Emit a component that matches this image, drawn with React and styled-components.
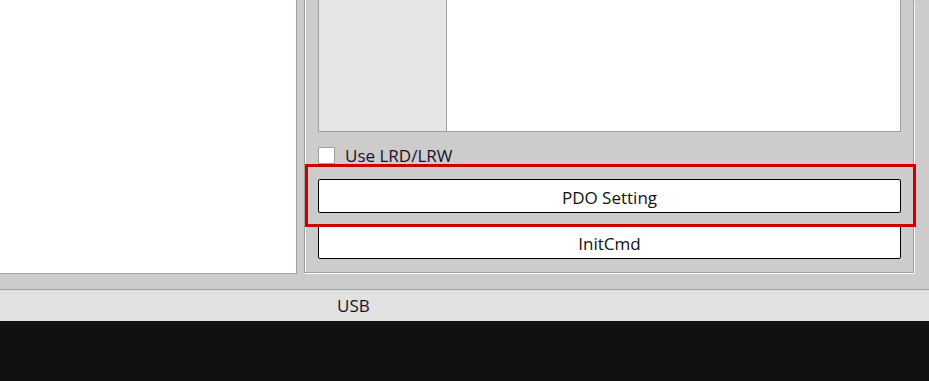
import styled, { createGlobalStyle } from "styled-components";

const GlobalStyle = createGlobalStyle`
  html, body {
    margin: 0;
    padding: 0;
    overflow: hidden;
    background: #111111;
  }
`;

const Window = styled.div`
  position: relative;
  width: 929px;
  height: 381px;
  display: flex;
  flex-direction: column;
  font-family: "Open Sans", "Noto Sans", sans-serif;
  color: #111;
`;

const Main = styled.div`
  height: 289px;
  display: flex;
  align-items: flex-start;
  gap: 7px;
  background: #cdcbcb;
`;

const LeftPanel = styled.div`
  width: 296px;
  height: 273px;
  background: #ffffff;
  border-right: 1px solid #a0a0a0;
  border-bottom: 1px solid #a0a0a0;
`;

const GroupBox = styled.div`
  width: 610px;
  height: 273px;
  box-sizing: border-box;
  border-left: 1px solid #a0a0a0;
  border-right: 1px solid #a0a0a0;
  border-bottom: 1px solid #a0a0a0;
  box-shadow: inset 1px 0 0 #ffffff, 1px 1px 0 #ffffff;
  padding: 0 12px 0 13px;
  display: flex;
  flex-direction: column;
`;

const ListView = styled.div`
  height: 132px;
  box-sizing: border-box;
  display: flex;
  background: #ffffff;
  border: 1px solid #a0a0a0;
  border-top: none;
`;

const HeaderColumn = styled.div`
  width: 127px;
  background: #e5e5e5;
  border-right: 1px solid #a0a0a0;
`;

const CheckRow = styled.label`
  display: flex;
  align-items: center;
  gap: 10px;
  margin-top: 15px;
  height: 17px;
  font-size: 17px;
  color: #14142a;
`;

const CheckBox = styled.span`
  width: 15px;
  height: 15px;
  background: #ffffff;
  border: 1px solid #a0a0a0;
  flex-shrink: 0;
`;

const Button = styled.div`
  height: 34px;
  box-sizing: border-box;
  margin-top: ${(p) => p.$top}px;
  display: flex;
  align-items: center;
  justify-content: center;
  background: #ffffff;
  border: 1px solid #000000;
  border-radius: 2px;
  font-size: 17px;
  padding-top: 2px;
  color: #111;
`;

const StatusBar = styled.div`
  height: 32px;
  box-sizing: border-box;
  border-top: 1px solid #a0a0a0;
  background: #e1e1e1;
  padding-left: 337px;
  display: flex;
  align-items: center;
  font-size: 17px;
  color: #14142a;
`;

const Console = styled.div`
  flex: 1;
  background: #111111;
`;

const Highlight = styled.div`
  position: absolute;
  left: 305px;
  top: 164px;
  width: 611px;
  height: 63px;
  box-sizing: border-box;
  border: 3px solid #cc0000;
  pointer-events: none;
`;

export default function App() {
  return (
    <>
      <GlobalStyle />
      <Window>
        <Main>
          <LeftPanel />
          <GroupBox>
            <ListView>
              <HeaderColumn />
            </ListView>
            <CheckRow>
              <CheckBox />
              Use LRD/LRW
            </CheckRow>
            <Button $top={15}>PDO Setting</Button>
            <Button $top={12}>InitCmd</Button>
          </GroupBox>
        </Main>
        <StatusBar>USB</StatusBar>
        <Console />
        <Highlight />
      </Window>
    </>
  );
}
